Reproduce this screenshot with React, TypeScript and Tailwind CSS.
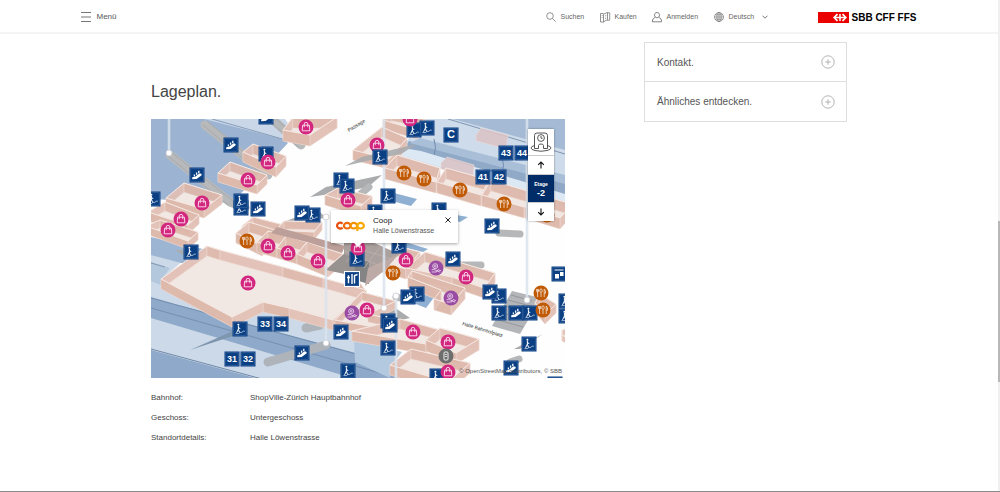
import React from "react";

type Pt = [number, number];

const poly = (pts: Pt[]) => pts.map((p) => p.join(",")).join(" ");

function Room({ rim, h = 9, floor = "#f1e7e3" }: { rim: Pt[]; h?: number; floor?: string }) {
  const lowered = rim.map(([x, y]) => [x, y + h] as Pt);
  const walls = rim.map((p, i) => {
    const q = rim[(i + 1) % rim.length];
    return [p, q, [q[0], q[1] + h], [p[0], p[1] + h]] as Pt[];
  });
  return (
    <g>
      <polygon points={poly(lowered)} fill={floor} />
      {walls.map((w, i) => (
        <polygon key={i} points={poly(w)} fill={i % 2 ? "#dcb7aa" : "#e1c0b5"} fillOpacity={0.95} stroke="#eed9d1" strokeWidth={0.5} />
      ))}
      <polygon points={poly(rim)} fill="none" stroke="#f6ebe6" strokeWidth={0.9} />
    </g>
  );
}

const rooms: { rim: Pt[]; h?: number; floor?: string }[] = [
  { rim: [[283, 130], [293, 117], [337, 117], [310, 135]], h: 11 },
  { rim: [[243, 152], [253, 144], [286, 156], [276, 167]], h: 10 },
  { rim: [[218, 173], [230, 162], [267, 175], [257, 185]], h: 9 },
  { rim: [[166, 198], [184, 183], [222, 195], [204, 209]], h: 9 },
  { rim: [[148, 212], [165, 202], [199, 215], [188, 225]], h: 9 },
  { rim: [[146, 226], [160, 220], [198, 232], [188, 241]], h: 8 },
  { rim: [[383, 120], [392, 112], [425, 118], [417, 130]], h: 9 },
  { rim: [[353, 150], [382, 127], [407, 138], [389, 159]], h: 10 },
  { rim: [[325, 195], [338, 188], [372, 196], [361, 206]], h: 10 },
  { rim: [[385, 168], [397, 155], [440, 168], [436, 182]], h: 11 },
  { rim: [[437, 182], [446, 168], [489, 180], [481, 195]], h: 11 },
  { rim: [[482, 195], [491, 180], [534, 193], [524, 207]], h: 11 },
  { rim: [[525, 207], [534, 193], [572, 204], [560, 218]], h: 11 },
  { rim: [[242, 226], [253, 217], [284, 225], [275, 233]], h: 8 },
  { rim: [[276, 230], [284, 221], [322, 222], [314, 232]], h: 8 },
  { rim: [[236, 233], [249, 222], [275, 230], [262, 246]], h: 10 },
  { rim: [[257, 242], [268, 231], [286, 236], [277, 248]], h: 10 },
  { rim: [[277, 248], [286, 236], [307, 242], [297, 254]], h: 10 },
  { rim: [[297, 254], [307, 242], [343, 254], [328, 267]], h: 10 },
  { rim: [[381, 262], [396, 246], [420, 252], [406, 269]], h: 10 },
  { rim: [[406, 268], [425, 252], [495, 273], [484, 288], [452, 277]], h: 10 },
  { rim: [[408, 277], [412, 271], [465, 288], [451, 304], [434, 299], [441, 290]], h: 11 },
  { rim: [[345, 286], [355, 276], [366, 291], [361, 299]], h: 8 },
  { rim: [[161, 279], [207, 246], [220, 250], [283, 267], [323, 278], [366, 290], [333, 320], [289, 308], [263, 302], [232, 317]], h: 10 },
  { rim: [[335, 320], [362, 292], [396, 301], [368, 314], [398, 321], [392, 330]], h: 8 },
  { rim: [[352, 331], [400, 319], [440, 330], [426, 344]], h: 10 },
  { rim: [[426, 340], [440, 328], [479, 339], [456, 353]], h: 11 },
  { rim: [[390, 365], [411, 349], [470, 363], [448, 382]], h: 10 },
  { rim: [[535, 303], [540, 294], [556, 304], [545, 315]], h: 9 },
  { rim: [[562, 330], [575, 326], [575, 342], [562, 335]], h: 6 },
];

const shops: Pt[] = [
  [306, 127], [268, 162], [248, 180], [202, 203], [181, 219], [168, 230], [268, 246], [288, 253], [318, 261],
  [248, 283], [410, 119], [348, 200], [358, 248], [406, 260], [466, 277], [367, 310], [413, 332], [448, 342], [448, 372],
];
const food: Pt[] = [[547, 215], [247, 241], [404, 173], [424, 179], [460, 190], [504, 204], [393, 273], [541, 293], [543, 310]];
const services: Pt[] = [[436, 268], [451, 298], [352, 313]];

const stairs: Pt[] = [
  [266, 154], [241, 208], [241, 201], [313, 215], [153, 199], [341, 180], [347, 186], [388, 196], [380, 157], [414, 130],
  [427, 128], [191, 252], [240, 329], [348, 371], [388, 348], [357, 259], [399, 246], [417, 294], [499, 296], [499, 313],
  [530, 313], [529, 344], [388, 321], [375, 212], [439, 210], [437, 376], [566, 301], [566, 316],
];
const escalators: Pt[] = [
  [266, 117], [231, 145], [197, 175], [258, 209], [302, 213], [492, 226], [453, 259], [408, 297], [490, 292], [516, 313],
  [341, 332], [302, 353], [390, 325], [511, 368], [555, 384],
];
const signs: { at: Pt; text: string }[] = [
  { at: [451, 135], text: "C" },
  { at: [506, 153], text: "43" },
  { at: [522, 153], text: "44" },
  { at: [483, 177], text: "41" },
  { at: [499, 177], text: "42" },
  { at: [265, 324], text: "33" },
  { at: [281, 324], text: "34" },
  { at: [232, 359], text: "31" },
  { at: [248, 359], text: "32" },
];

function Plate() {
  return (
    <>
      <rect x={-7.5} y={-7.5} width={15} height={15} fill="#0b3f83" />
      <rect x={-6.2} y={-6.2} width={12.4} height={12.4} fill="none" stroke="#4a73aa" strokeWidth={0.5} />
    </>
  );
}

function StairsMark({ at }: { at: Pt }) {
  return (
    <g transform={`translate(${at[0]} ${at[1]})`}>
      <Plate />
      <circle cx={-1.6} cy={-4.2} r={1} fill="#fff" />
      <path d="M-1.6-3v3.2l1.2 3.4M-1.6 0l-1.8 3.8M-1.6-2l1.8 2" stroke="#fff" strokeWidth={1} fill="none" />
      <path d="M-4.6 4.6h3.4l1-1.2h2l1.4-1.2h1.6" stroke="#dfe8f3" strokeWidth={0.7} fill="none" />
    </g>
  );
}

function EscalatorMark({ at }: { at: Pt }) {
  return (
    <g transform={`translate(${at[0]} ${at[1]})`}>
      <Plate />
      <path d="M-4.6 4.2q-1-1.8.6-2.2h1.8l4.4-3.4h1.6q1.6.6.6 1.8l-4.8 3.6z" fill="#fff" />
      <path d="M-2.6 1.4v-2M-.4-.2v-2.2M1.8-1.8v-2.4" stroke="#fff" strokeWidth={1.3} />
    </g>
  );
}

function ShopMark({ at }: { at: Pt }) {
  return (
    <g transform={`translate(${at[0]} ${at[1]})`}>
      <circle r={7.5} fill="#d2267f" />
      <path d="M-3.4-1.8h6.8l.4 5.600h-7.600zM-1.800.2v-3.200q0-1.600 1.800-1.600t1.800 1.600V.2" fill="none" stroke="#fbe3ef" strokeWidth={0.9} />
    </g>
  );
}

function FoodMark({ at }: { at: Pt }) {
  return (
    <g transform={`translate(${at[0]} ${at[1]})`}>
      <circle r={7.5} fill="#c05a05" />
      <path d="M-4.400-4v2q0 1 1 1t1-1v-2M-3.400-4v8M3.200 4v-8q1.600 1 1.400 4.200h-1.400M0 4v-4" fill="none" stroke="#f8e6d8" strokeWidth={0.8} />
      <ellipse cy={-2.3} rx={1.2} ry={1.8} fill="none" stroke="#f8e6d8" strokeWidth={0.8} />
    </g>
  );
}

function ServiceMark({ at }: { at: Pt }) {
  return (
    <g transform={`translate(${at[0]} ${at[1]})`} fill="none" stroke="#f1e3f4" strokeWidth={0.8}>
      <circle r={7.5} fill="#9a4ba3" stroke="none" />
      <circle cx={-0.8} cy={-1.8} r={2.5} />
      <circle cx={-0.8} cy={-1.8} r={0.9} />
      <path d="M-4.400 1.800q2.400-.8 4 .4l4.600 2M-4.400 4h4.800l1.600-2.400 3 1.200" />
    </g>
  );
}

function StationMap() {
  return (
    <svg viewBox="151 119 414 259" className="block h-auto w-full" role="img" aria-label="Lageplan ShopVille-Zürich Hauptbahnhof">
      <rect x={151} y={119} width={414} height={259} fill="#fefefe" />

      {/* platforms, top left */}
      <polygon points="151,119 262,119 288,143 258,175 232,203 151,199" fill="#9cb4d2" />
      <polygon points="204,119 285,119 297,136 286,140" fill="#c9d7e8" />
      <path d="M212 119L286 140" stroke="#889db8" strokeWidth={1} />
      <path d="M258 119L290 131" stroke="#e4ecf5" strokeWidth={1.2} />

      {/* platforms, top right */}
      <polygon points="418,119 565,119 565,206 392,153 408,140" fill="#cddbea" />
      <polygon points="453,119 565,119 565,150" fill="#a5bbd5" />
      <path d="M448 119L565 154" stroke="#8196b1" strokeWidth={1} />
      <polygon points="409,141 565,181 565,198 402,150" fill="#8fa9c7" />
      <polygon points="420,138 565,175 565,184 410,143" fill="#a9bfd8" />
      <path d="M434 139q3 8 0 17M502 157q3 8 0 17" fill="none" stroke="#6f8cb0" strokeWidth={1} />
      <polygon points="391,163 403,148 421,151 565,194 565,204 400,155" fill="#dce8f3" />
      <g fill="#d9c3c6" stroke="#ecdcdc" strokeWidth={0.6} fillOpacity={0.9}>
        <polygon points="476,135 481,128 508,135 506,149 476,141" />
        <polygon points="441,163 447,157 474,165 473,178 441,169" />
      </g>

      {/* platforms, bottom left */}
      <polygon points="151,238 200,246 161,280 232,326 263,310 288,314 390,342 402,378 151,378" fill="#cbd9e8" />
      <polygon points="151,237 207,250 185,264 151,255" fill="#9cb5d2" />
      <polygon points="151,262 170,268 161,280 175,291 151,281" fill="#b3c7dd" />
      <path d="M151 263L165 267" stroke="#8398b2" strokeWidth={1} fill="none" />
      <polygon points="151,297 175,304 400,365 400,378 352,378 151,318" fill="#8ea9c9" />
      <path d="M151 298L400 366M151 308L380 373" stroke="#738cac" strokeWidth={0.9} fill="none" />
      <polygon points="151,350 262,380 151,380" fill="#8ea9c9" />
      <path d="M151 349L262 379" stroke="#7088a6" strokeWidth={1} />
      <polygon points="354,339 402,352 390,368 390,378 355,362" fill="#b3c9e0" />

      {/* open stair wells */}
      <g fill="#8fb0d2">
        <polygon points="394,193 417,199 411,206 388,200" />
        <polygon points="445,213 468,217 460,222 440,217" />
        <polygon points="405,242 428,249 423,252 403,247" />
        <polygon points="417,293 435,296 426,308 408,301" />
      </g>

      {/* escalators and ramps */}
      <g fill="none" stroke="#b7b9bb" strokeLinecap="round" strokeWidth={9}>
        <path d="M170 155L230 202M205 125L268 175M273 120L301 145" />
      </g>
      <g fill="none" stroke="#a1a4a7" strokeWidth={0.7}>
        <path d="M168 156L228 205M171 152L233 201M203 125L265 177M207 121L270 174M270 121L298 147M276 119L304 144" />
      </g>
      <g fill="none" stroke="#aeb4ba" strokeLinecap="round" strokeWidth={9}>
        <path d="M268 362L326 345M306 328l14-3" />
      </g>
      <g fill="#a9abad">
        <polygon points="310,197 326,187 382,175 368,187 343,192" />
        <polygon points="190,350 233,331 236,335" fill="#7f96af" />
        <polygon points="175,250 198,251 192,260" />
        <polygon points="281,223 317,209 326,218 300,221" />
        <polygon points="514,349 543,334 520,349" />
        <polygon points="367,304 385,301 410,318 397,321" />
      </g>
      <g fill="none" stroke="#b5b7b9" strokeLinecap="round" strokeWidth={7}>
        <path d="M499 233l21 1M369 187l-12 10M461 265l20 0M479 288l8 2M396 297l9 2M510 362l9-3M431 369l7 8M232 204l14 4" />
      </g>
      <polygon points="512,291 541,298 520,334 492,326" fill="#b3b5b8" />
      <path d="M511 295l21 6M508 300l26 7M505 306l25 7M502 313l25 7M498 320l25 7" stroke="#94989c" strokeWidth={1} />

      {rooms.map((r, i) => (
        <Room key={i} {...r} />
      ))}

      {/* ramp over the north shops */}
      <polygon points="345,166 362,157 417,144 401,154 371,160" fill="#a9abad" fillOpacity={0.9} />

      {/* sunken concourse */}
      <polygon points="271,233 277,227 345,246 342,253 307,242" fill="#bb9f98" />
      <polygon points="344,243 372,242 399,254 374,277 345,268 326,270 344,254" fill="#aaa09e" />
      <polygon points="326,270 344,254 354,258 354,276" fill="#989290" />
      <polygon points="354,262 369,261 369,284 355,280" fill="#848484" />
      <polygon points="368,268 399,254 385,270 365,286" fill="#bda9a5" />
      <path d="M350 246L392 259M345 251L380 266M362 245L346 262M380 247L364 268" stroke="#c1b5b1" strokeWidth={0.7} />

      {/* elevator shafts */}
      <g stroke="#dbe4ee" strokeWidth={2.6} opacity={0.85}>
        <path d="M169 119V153M326 217V343M384 119V307M527 119V299M396 299V378" />
      </g>
      <g fill="#fff" stroke="#c9ccd0" strokeWidth={0.8}>
        {[[169, 153], [326, 217], [326, 343], [384, 308], [396, 296], [527, 300]].map(([x, y]) => (
          <circle key={`${x}-${y}`} cx={x} cy={y} r={3} />
        ))}
      </g>

      <g fill="#333" fontFamily="Liberation Sans, sans-serif">
        <text fontSize={5} transform="translate(349 132) rotate(-32)">Passage</text>
        <text fontSize={5} transform="translate(462 325) rotate(17)">Halle Bahnhofplatz</text>
      </g>

      <ShopMark at={[377, 145]} />
      {stairs.map((p) => (
        <StairsMark key={p.join()} at={p} />
      ))}
      {escalators.map((p) => (
        <EscalatorMark key={p.join()} at={p} />
      ))}
      {signs.map((s) => (
        <g key={s.text} transform={`translate(${s.at[0]} ${s.at[1]})`}>
          <Plate />
          <text y={3.4} textAnchor="middle" fill="#fff" fontSize={s.text.length > 1 ? 9 : 11} fontWeight={700} fontFamily="Liberation Sans, sans-serif">
            {s.text}
          </text>
        </g>
      ))}
      <g transform="translate(352 279)" stroke="#fff" fill="none">
        <Plate />
        <path d="M-3.500-3.800v8M-5-1.500h3M0-5v10M2.500 4.500v-8l3-1" strokeWidth={1.4} />
      </g>
      <g transform="translate(559 274)">
        <Plate />
        <path d="M-4.500-4h9" stroke="#fff" strokeWidth={1} />
        <path d="M-4 0h4v4.500h-4zM1-2h3.500v4H1z" fill="#fff" />
      </g>
      {shops.map((p) => (
        <ShopMark key={p.join()} at={p} />
      ))}
      {food.map((p) => (
        <FoodMark key={p.join()} at={p} />
      ))}
      {services.map((p) => (
        <ServiceMark key={p.join()} at={p} />
      ))}
      <g transform="translate(446 356)">
        <circle r={7.5} fill="#6d6d6d" />
        <rect x={-2} y={-4} width={4} height={8} rx={1} fill="none" stroke="#eee" strokeWidth={1} />
        <path d="M-1-1.500h2M-1 .5h2" stroke="#eee" strokeWidth={0.8} />
      </g>
    </svg>
  );
}

function CoopLogo() {
  return (
    <svg viewBox="0 0 29 12" className="h-3 w-[29px] shrink-0" role="img" aria-label="Coop" fill="none" strokeWidth={2.2}>
      <path d="M6.600 2.800A3.200 2.800 0 1 0 6.600 6.600" stroke="#e8500f" />
      <ellipse cx={11.200} cy={4.700} rx={3.300} ry={2.800} stroke="#ee6b0c" />
      <ellipse cx={17.800} cy={4.700} rx={3.300} ry={2.800} stroke="#f39200" />
      <ellipse cx={24.600} cy={4.700} rx={3.300} ry={2.800} stroke="#f9a800" />
      <path d="M21.400 4.700v5.300" stroke="#f9a800" />
    </svg>
  );
}

function MapPopup() {
  return (
    <div className="absolute top-[35%] left-[43.5%] flex h-[33px] w-[127px] items-start bg-white pt-[5px] pl-[5px] shadow-[0_1px_3px_rgba(0,0,0,0.35)]">
      <div className="mt-[6px]">
        <CoopLogo />
      </div>
      <div className="ml-2 flex-1 whitespace-nowrap">
        <h2 className="text-[8px] leading-[11px] text-[#222]">Coop</h2>
        <p className="text-[7px] leading-[10px] text-[#555]">Halle Löwenstrasse</p>
      </div>
      <button type="button" aria-label="Schliessen" className="mt-px mr-[6px] flex size-2 items-center justify-center">
        <svg viewBox="0 0 8 8" className="size-2" stroke="#222" strokeWidth={1}>
          <path d="M1.500 1.500l5 5M6.500 1.500l-5 5" />
        </svg>
      </button>
      <svg viewBox="0 0 8 4" className="absolute -bottom-1 left-[23px] h-1 w-2">
        <path d="M0 0h8L4 4z" fill="#fff" />
      </svg>
    </div>
  );
}

function FloorControl() {
  return (
    <div className="absolute top-[10px] right-[11px] w-[26px] divide-y divide-[#ccc] bg-white shadow-[0_0_2px_rgba(0,0,0,0.4)]">
      <button type="button" aria-label="Bahnhofübersicht" className="flex h-[27px] w-full items-center justify-center">
        <svg viewBox="0 0 22 22" className="size-[22px]" fill="none" stroke="#444" strokeWidth={0.9}>
          <path d="M4.500 17.500V4.500q0-2.500 2.500-2.500h8q2.500 0 2.500 2.500v13h-4v-3q0-1.500-2.500-1.500t-2.500 1.500v3z" />
          <circle cx={11} cy={7} r={3.4} />
          <path d="M11 5v2.200h1.600" />
          <path d="M4.500 14.500Q1 15.500 1 17t4 2.500q6 1.500 12 0 4-1 4-2.500t-3.500-2.500" />
        </svg>
      </button>
      <button type="button" aria-label="Etage nach oben" className="flex h-[19px] w-full items-center justify-center">
        <svg viewBox="0 0 8 8" className="size-2" fill="none" stroke="#111" strokeWidth={1.1}>
          <path d="M4 7.500V1M1.200 3.800L4 1l2.800 2.800" />
        </svg>
      </button>
      <div className="flex h-[28px] flex-col items-center justify-center bg-[#002d68] font-bold text-white">
        <span className="text-[5px] leading-[8px]">Etage</span>
        <span className="text-[9px] leading-[10px]">-2</span>
      </div>
      <button type="button" aria-label="Etage nach unten" className="flex h-[18px] w-full items-center justify-center">
        <svg viewBox="0 0 8 8" className="size-2" fill="none" stroke="#111" strokeWidth={1.1}>
          <path d="M4 .5V7M1.200 4.200L4 7l2.800-2.800" />
        </svg>
      </button>
    </div>
  );
}

function SearchIcon() {
  return (
    <svg viewBox="0 0 12 12" className="size-3" fill="none" stroke="#777" strokeWidth={0.8}>
      <circle cx={5} cy={5} r={3.3} />
      <path d="M7.500 7.500l3.200 3.200" />
    </svg>
  );
}

function TicketIcon() {
  return (
    <svg viewBox="0 0 12 12" className="size-3" fill="none" stroke="#777" strokeWidth={0.8}>
      <path d="M4.500 2.500H1.500v8.500h3.500M4.500 3.200l4-1.700v7.200l-4 2zM8.500 1.800h2.200v7.400H8M2.800 4.500h.8M2.800 6.500h.8M6 5l1.200-.5M6 7.500l1.200-.5" />
    </svg>
  );
}

function UserIcon() {
  return (
    <svg viewBox="0 0 12 12" className="size-3" fill="none" stroke="#777" strokeWidth={0.9}>
      <path d="M6 1.500c-1.700 0-2.500 1.200-2.500 2.600S4.600 6.800 6 6.800s2.500-1.300 2.500-2.700S7.700 1.500 6 1.500zM4.400 6.400C2.400 7 1.400 8 1.400 10.800h9.200c0-2.800-1-3.800-3-4.400" />
    </svg>
  );
}

function GlobeIcon() {
  return (
    <svg viewBox="0 0 12 12" className="size-3" fill="none" stroke="#777" strokeWidth={0.7}>
      <circle cx={6} cy={6} r={4.500} />
      <ellipse cx={6} cy={6} rx={2.100} ry={4.500} />
      <path d="M6 1.500v9M1.500 6h9M2.200 3.800h7.600M2.200 8.200h7.600" />
    </svg>
  );
}

function Header() {
  return (
    <header className="border-b-2 border-[#f4f4f4] pr-[3px]">
      <div className="mx-auto flex h-8 w-full max-w-[836px] items-center pt-[2px]">
        <button type="button" className="flex items-center gap-[6px] text-[8px] text-[#555]">
          <svg viewBox="0 0 10 10" className="size-[10px]" stroke="#777" strokeWidth={1}>
            <path d="M0 .5h10M0 5h10M0 9.500h10" />
          </svg>
          Menü
        </button>
        <nav className="ml-auto flex items-center text-[7px] text-[#666]">
          <a href="#suchen" className="flex w-[54px] items-center gap-1"><SearchIcon />Suchen</a>
          <a href="#kaufen" className="flex w-[52px] items-center gap-1"><TicketIcon />Kaufen</a>
          <a href="#anmelden" className="flex w-[62px] items-center gap-1"><UserIcon />Anmelden</a>
          <button type="button" className="flex w-[55px] items-center gap-1">
            <GlobeIcon />
            Deutsch
            <svg viewBox="0 0 6 4" className="ml-auto h-1 w-[6px]" fill="none" stroke="#666" strokeWidth={0.9}>
              <path d="M.5.7L3 3.200 5.500.7" />
            </svg>
          </button>
        </nav>
        <a href="#start" className="ml-[50px] flex items-center gap-[3px] text-[10px] font-bold whitespace-nowrap text-black">
          <svg viewBox="0 0 31 11" className="h-[11px] w-[31px]" aria-hidden="true">
            <path d="M0 0h31v11H0z" fill="#eb0000" />
            <path d="M16.500 5.500h11M22 2v7" stroke="#fff" strokeWidth={1.500} />
            <path d="M19.500 2.200L16.200 5.500l3.300 3.300M24.500 2.200l3.300 3.300-3.300 3.300" fill="none" stroke="#fff" strokeWidth={1.700} />
          </svg>
          SBB CFF FFS
        </a>
      </div>
    </header>
  );
}

const details = [
  ["Bahnhof:", "ShopVille-Zürich Hauptbahnhof"],
  ["Geschoss:", "Untergeschoss"],
  ["Standortdetails:", "Halle Löwenstrasse"],
];

export default function App() {
  return (
    <div className="relative flex min-h-screen flex-col border-b border-[#8a8a8a] bg-white font-['Liberation_Sans',Arial,sans-serif]">
      <Header />
      <main className="flex-1 pr-[2px]">
        <div className="mx-auto flex w-full max-w-[696px] items-start gap-[79px] pt-2">
          <section className="min-w-0 flex-1 pt-[38px]">
            <h1 className="text-[16px] leading-6 text-[#444]">Lageplan.</h1>
            <div className="relative mt-[15px] overflow-hidden">
              <StationMap />
              <MapPopup />
              <FloorControl />
              <p className="absolute right-[3px] bottom-[2px] text-[6px] leading-[9px] text-[#555]">© OpenStreetMap contributors, © SBB</p>
            </div>
            <dl className="mt-[10px] text-[8px] leading-5 text-[#444]">
              {details.map(([term, value]) => (
                <div key={term} className="grid grid-cols-[99px_1fr]">
                  <dt>{term}</dt>
                  <dd>{value}</dd>
                </div>
              ))}
            </dl>
          </section>
          <aside className="w-[203px] shrink-0 divide-y divide-[#dedede] border border-[#dedede]">
            {["Kontakt.", "Ähnliches entdecken."].map((label) => (
              <button key={label} type="button" className="flex h-[39px] w-full items-center justify-between pr-[11px] pl-3 text-[10px] text-[#555]">
                {label}
                <svg viewBox="0 0 14 14" className="size-[14px]" fill="none" stroke="#aaa" strokeWidth={0.9}>
                  <circle cx={7} cy={7} r={6.200} />
                  <path d="M7 4.200v5.600M4.200 7h5.600" />
                </svg>
              </button>
            ))}
          </aside>
        </div>
      </main>
      <div className="absolute inset-y-0 right-0 w-[2px] bg-[#f0f0f0]" aria-hidden="true">
        <div className="mt-[221px] h-[161px] bg-[#b8b8b8]" />
      </div>
    </div>
  );
}
